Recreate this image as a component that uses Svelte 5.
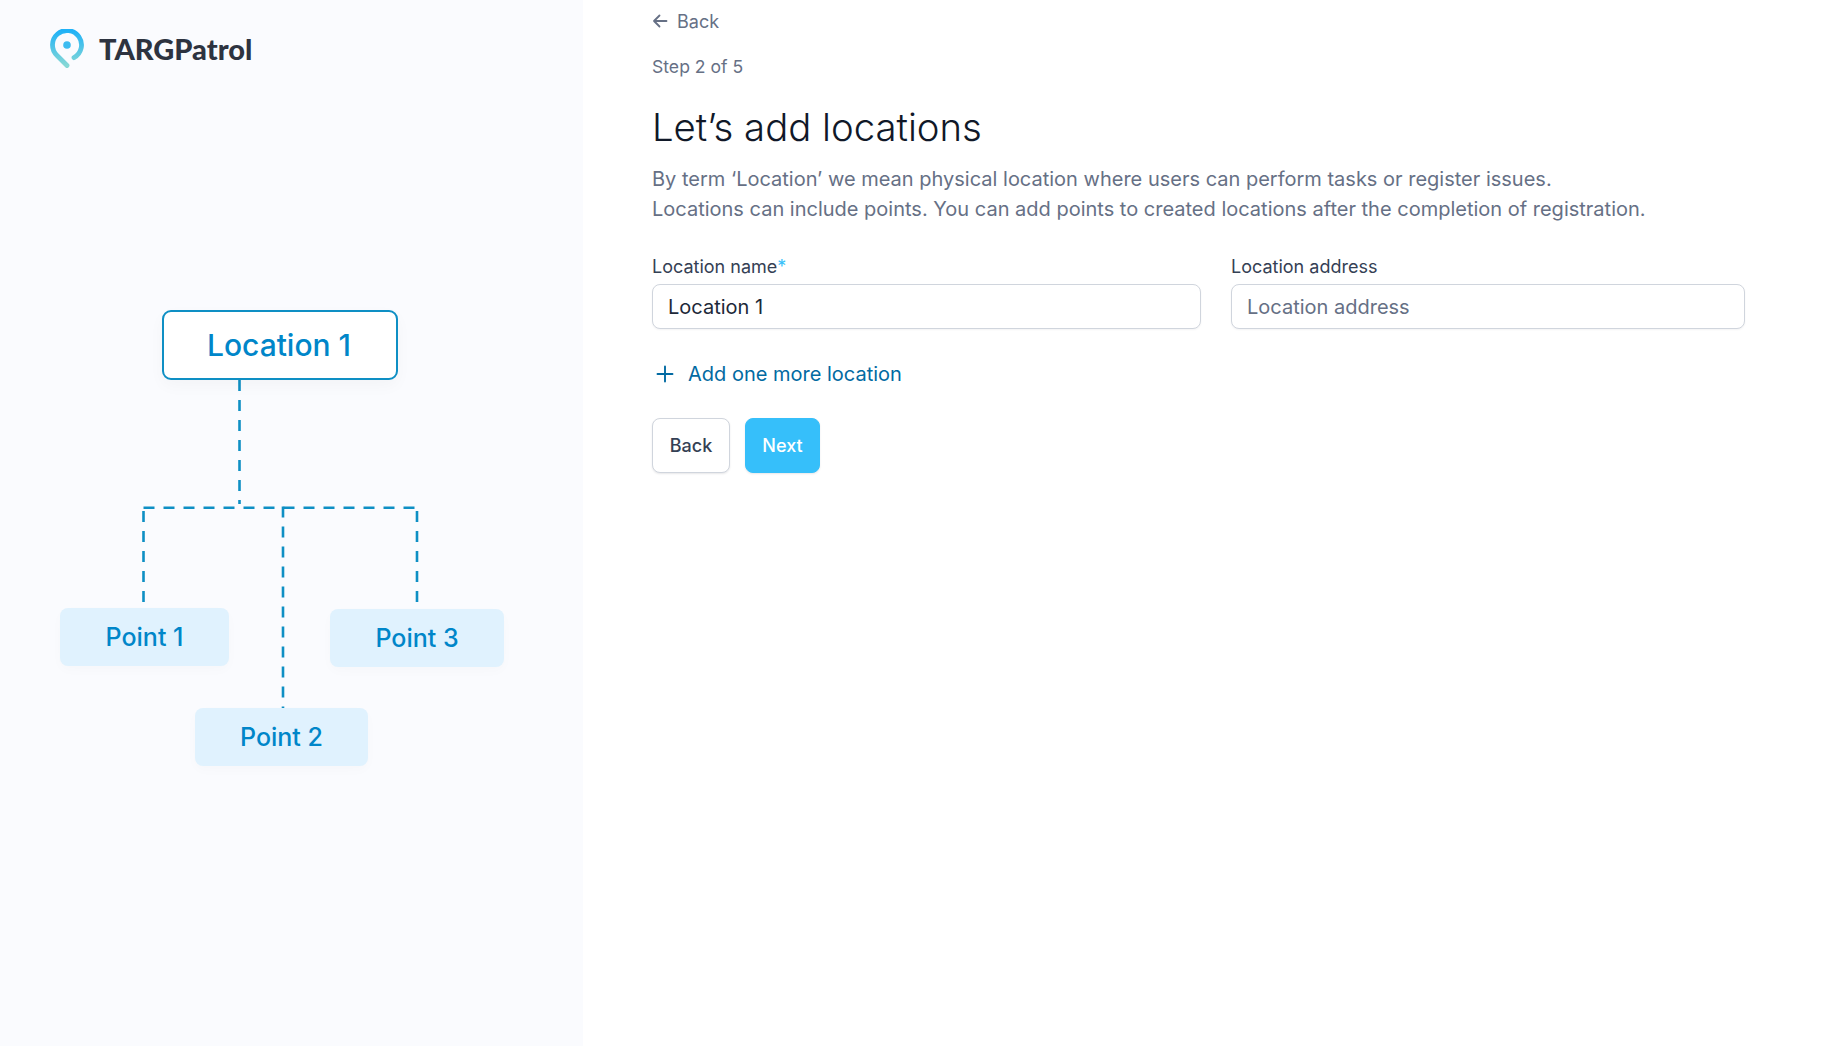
<script lang="ts">
  const points = [
    { name: "Point 1", cls: "p1" },
    { name: "Point 2", cls: "p2" },
    { name: "Point 3", cls: "p3" },
  ];
  let locationName = "Location 1";
</script>

<div class="page">
  <aside class="side">
    <div class="logo">
      <svg width="34" height="40" viewBox="0 0 34 40" fill="none">
        <defs>
          <linearGradient id="pin" x1="0" y1="0" x2="0" y2="1">
            <stop offset="0" stop-color="#1fb2f7" />
            <stop offset="1" stop-color="#86d8d6" />
          </linearGradient>
        </defs>
        <path
          d="M17 36.5 L7 26.5 A14.5 14.5 0 1 1 24 28.7"
          stroke="url(#pin)"
          stroke-width="4.8"
          stroke-linecap="round"
          stroke-linejoin="round"
        />
        <circle cx="17" cy="16" r="3.8" fill="#3dbcf0" />
      </svg>
      <span class="brand">TARGPatrol</span>
    </div>

    <div class="diagram">
      <svg class="lines" width="583" height="500" viewBox="0 0 583 500" fill="none">
        <g stroke="#0e8fc4" stroke-width="2.6" stroke-dasharray="11 9">
          <path d="M239.5 90V214" />
          <path d="M143.5 217.7H417" />
          <path d="M143.5 221V317" />
          <path d="M283 216.4V424" />
          <path d="M417 221V315" />
        </g>
      </svg>
      <div class="root">Location 1</div>
      {#each points as p}
        <div class="point {p.cls}">{p.name}</div>
      {/each}
    </div>
  </aside>

  <main class="main">
    <a class="back" href="#back">
      <svg width="16" height="16" viewBox="0 0 16 16" fill="none">
        <path d="M14.5 8H2M7.5 2.5 2 8l5.5 5.5" stroke="#667085" stroke-width="1.8" stroke-linecap="round" stroke-linejoin="round" />
      </svg>
      Back
    </a>
    <div class="step">Step 2 of 5</div>
    <h1>Let’s add locations</h1>
    <p class="lead">
      By term ‘Location’ we mean physical location where users can perform tasks or register issues.<br />
      Locations can include points. You can add points to created locations after the completion of registration.
    </p>

    <div class="fields">
      <label class="field">
        <span class="lab">Location name<span class="req">*</span></span>
        <input type="text" bind:value={locationName} />
      </label>
      <label class="field">
        <span class="lab">Location address</span>
        <input type="text" placeholder="Location address" />
      </label>
    </div>

    <a class="add" href="#add">
      <svg width="20" height="20" viewBox="0 0 20 20" fill="none">
        <path d="M10 2.5v15M2.5 10h15" stroke="#026aa2" stroke-width="1.9" stroke-linecap="round" />
      </svg>
      Add one more location
    </a>

    <div class="actions">
      <button class="btn ghost">Back</button>
      <button class="btn primary">Next</button>
    </div>
  </main>
</div>

<style>
  :global(body) {
    margin: 0;
    background: #fff;
    font-family: Inter, "Noto Sans", sans-serif;
  }
  .page {
    display: flex;
    min-height: 100vh;
  }
  .side {
    width: 583px;
    flex: none;
    background: #fafbfe;
    padding-top: 29px;
    box-sizing: border-box;
  }
  .logo {
    display: flex;
    align-items: flex-start;
    gap: 15px;
    padding-left: 50px;
    height: 40px;
  }
  .brand {
    font-family: Lato, Inter, sans-serif;
    font-weight: 900;
    font-size: 29px;
    line-height: 40px;
    color: #2d3340;
  }
  .diagram {
    position: relative;
    height: 500px;
    margin-top: 221px;
  }
  .lines {
    position: absolute;
    left: 0;
    top: 0;
  }
  .root {
    position: absolute;
    left: 162px;
    top: 20px;
    width: 236px;
    height: 70px;
    box-sizing: border-box;
    border: 2px solid #0e8fc4;
    border-radius: 9px;
    background: #fff;
    color: #0086c9;
    font-size: 30px;
    font-weight: 450;
    padding-right: 2px;
    display: flex;
    align-items: center;
    justify-content: center;
    box-shadow: 0 6px 16px rgba(16, 24, 40, 0.03);
  }
  .point {
    position: absolute;
    height: 58px;
    border-radius: 8px;
    background: #e0f2fe;
    color: #0086c9;
    font-size: 25px;
    font-weight: 450;
    display: flex;
    align-items: center;
    justify-content: center;
    box-shadow: 0 4px 12px rgba(16, 24, 40, 0.02);
  }
  .p1 { left: 60px; top: 318px; width: 169px; }
  .p2 { left: 195px; top: 418px; width: 173px; }
  .p3 { left: 330px; top: 319px; width: 174px; }

  .main {
    flex: 1;
    padding: 12px 83px 0 69px;
    min-width: 0;
  }
  .back {
    display: flex;
    align-items: center;
    gap: 9px;
    height: 18px;
    color: #667085;
    font-size: 18px;
    text-decoration: none;
  }
  .step {
    margin-top: 24px;
    font-size: 17.6px;
    line-height: 26px;
    color: #667085;
  }
  h1 {
    margin: 24px 0 0;
    font-size: 38.3px;
    line-height: 46px;
    font-weight: 350;
    color: #101828;
  }
  .lead {
    margin: 14px 0 0;
    font-size: 20px;
    line-height: 30px;
    color: #667085;
  }
  .fields {
    display: grid;
    grid-template-columns: 549fr 514fr;
    column-gap: 30px;
    margin-top: 30px;
  }
  .field {
    display: flex;
    flex-direction: column;
    gap: 4px;
  }
  .lab {
    font-size: 18px;
    line-height: 26px;
    font-weight: 400;
    color: #344054;
  }
  .req { color: #36bffa; }
  input {
    height: 45px;
    box-sizing: border-box;
    width: 100%;
    border: 1px solid #d0d5dd;
    border-radius: 8px;
    padding: 0 15px;
    font: 400 20px Inter, sans-serif;
    color: #1d2939;
    background: #fff;
    box-shadow: 0 1px 2px rgba(16, 24, 40, 0.05);
    outline: none;
  }
  input::placeholder { color: #667085; opacity: 1; }
  .add {
    display: flex;
    align-items: center;
    gap: 13px;
    margin-top: 32px;
    padding-left: 3px;
    color: #026aa2;
    font-size: 20px;
    font-weight: 400;
    line-height: 26px;
    text-decoration: none;
  }
  .actions {
    display: flex;
    gap: 15px;
    margin-top: 31px;
  }
  .btn {
    height: 55px;
    border-radius: 8px;
    font: 500 18px Inter, sans-serif;
    padding: 0;
    box-shadow: 0 1px 2px rgba(16, 24, 40, 0.1);
  }
  .ghost {
    width: 78px;
    background: #fff;
    color: #344054;
    border: 1px solid #d0d5dd;
  }
  .primary {
    width: 75px;
    background: #36bffa;
    color: #fff;
    border: 1px solid #36bffa;
  }
</style>
